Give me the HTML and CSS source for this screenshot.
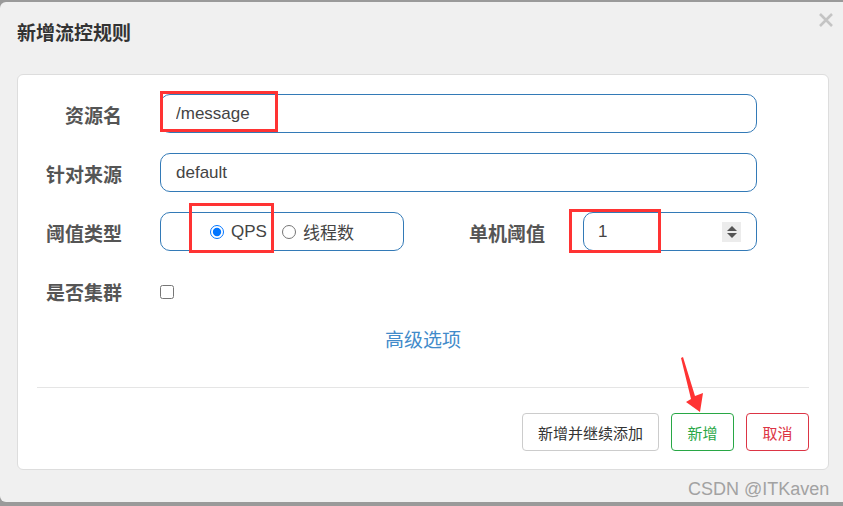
FILE: index.html
```html
<!DOCTYPE html>
<html lang="zh-CN">
<head>
    <meta charset="UTF-8">
    <meta name="viewport" content="width=device-width, initial-scale=1.0">
    <title>新增流控规则</title>
    <link rel="stylesheet" href="styles.css">
</head>
<body>
    <div class="modal">
        <div class="modal-header">
            <h4 class="modal-title">新增流控规则</h4>
            <button class="modal-close" type="button">
                <svg width="14" height="14" viewBox="0 0 14 14" fill="none" stroke="currentColor" stroke-width="2.6">
                    <path d="M1 1L13 13M13 1L1 13"></path>
                </svg>
            </button>
        </div>
        <div class="modal-body">
            <form class="rule-form">
                <div class="form-row">
                    <label class="form-label">资源名</label>
                    <input class="form-input wide" type="text" value="/message">
                </div>
                <div class="form-row">
                    <label class="form-label">针对来源</label>
                    <input class="form-input wide" type="text" value="default">
                </div>
                <div class="form-row">
                    <label class="form-label">阈值类型</label>
                    <div class="radio-group">
                        <label class="radio"><input type="radio" name="grade" checked>QPS</label>
                        <label class="radio"><input type="radio" name="grade">线程数</label>
                    </div>
                    <label class="form-label">单机阈值</label>
                    <div class="num-field">
                        <input type="text" value="1">
                        <span class="spinner"><i class="up"></i><i class="down"></i></span>
                    </div>
                </div>
                <div class="form-row">
                    <label class="form-label">是否集群</label>
                    <div class="check-cell"><input type="checkbox"></div>
                </div>
            </form>
            <div class="advanced"><a href="#">高级选项</a></div>
            <hr class="divider">
            <div class="modal-footer">
                <button class="btn btn-default" type="button">新增并继续添加</button>
                <button class="btn btn-success" type="button">新增</button>
                <button class="btn btn-danger" type="button">取消</button>
            </div>
        </div>
        <div class="watermark">CSDN @ITKaven</div>
    </div>

    <!-- annotations drawn over the screenshot -->
    <svg class="marks" width="843" height="506" viewBox="0 0 843 506">
        <g fill="none" stroke="#f33" stroke-width="3">
            <rect x="161.5" y="92.5" width="115" height="38"></rect>
            <rect x="190.5" y="204.5" width="82" height="47"></rect>
            <rect x="570.5" y="210.5" width="89" height="41"></rect>
        </g>
        <polygon fill="#f33" points="681,358 683,357 695,396 703,393 700,412 686,402 691,399"></polygon>
    </svg>
</body>
</html>
```

FILE: styles.css
```css
:root {
    --border-blue: #337ab7;
    --label-color: #555555;
    --link-color: #428bca;
    --green: #28a745;
    --red: #dc3545;
}

* {
    box-sizing: border-box;
}

body {
    margin: 0;
    height: 506px;
    overflow: hidden;
    position: relative;
    background: #9a9a9a;
    font-family: "Liberation Sans", "Noto Sans CJK SC", sans-serif;
    color: #333;
}

.modal {
    position: relative;
    margin-top: 2px;
    height: 500px;
    background: #f0f0f0;
    border-radius: 6px 0 0 6px;
}

.modal-header {
    height: 72px;
    display: flex;
    justify-content: space-between;
    align-items: flex-start;
    padding: 11px 10px 0 17px;
}

.modal-title {
    margin: 8px 0 0;
    font-size: 19px;
    line-height: 26px;
    font-weight: bold;
    color: #333;
}

.modal-close {
    background: none;
    border: none;
    padding: 0;
    color: #c4c4c4;
    cursor: pointer;
    line-height: 0;
}

.modal-body {
    margin-left: 17px;
    width: 812px;
    height: 396px;
    background: #fff;
    border: 1px solid #dddddd;
    border-radius: 6px;
    padding-top: 19px;
}

.rule-form {
    display: grid;
    row-gap: 20px;
    padding-right: 71px;
}

.form-row {
    display: grid;
    grid-template-columns: 104px 244px 1fr 174px;
    column-gap: 38px;
    align-items: center;
    height: 39px;
}

.form-label {
    text-align: right;
    font-size: 19px;
    line-height: 22px;
    font-weight: bold;
    color: var(--label-color);
    padding-top: 6px;
}

.form-input {
    height: 39px;
    border: 1px solid var(--border-blue);
    border-radius: 10px;
    padding: 0 15px;
    font-family: inherit;
    font-size: 17px;
    color: #444;
    outline: none;
    background: #fff;
}

.form-input.wide {
    grid-column: 2 / 5;
}

.radio-group {
    height: 39px;
    display: flex;
    align-items: center;
    justify-content: center;
    border: 1px solid var(--border-blue);
    border-radius: 10px;
}

.radio {
    display: flex;
    align-items: center;
    gap: 7px;
    font-size: 17px;
    color: #444;
}

.radio + .radio {
    margin-left: 15px;
}

.radio input {
    margin: 0;
    width: 14px;
    height: 14px;
}

.num-field {
    height: 39px;
    display: flex;
    align-items: center;
    border: 1px solid var(--border-blue);
    border-radius: 10px;
    padding: 0 15px 0 14px;
}

.num-field input {
    flex: 1;
    min-width: 0;
    border: none;
    outline: none;
    padding: 0;
    font-family: inherit;
    font-size: 17px;
    color: #444;
}

.spinner {
    width: 19px;
    height: 20px;
    background: #ececec;
    display: flex;
    flex-direction: column;
    align-items: center;
    justify-content: center;
    gap: 2px;
}

.spinner i {
    width: 0;
    height: 0;
    border-left: 5px solid transparent;
    border-right: 5px solid transparent;
}

.spinner .up {
    border-bottom: 5px solid #555;
}

.spinner .down {
    border-top: 5px solid #555;
}

.check-cell {
    display: flex;
    align-items: center;
    padding-top: 3px;
}

.check-cell input {
    margin: 0;
    width: 14px;
    height: 14px;
}

.advanced {
    margin-top: 20px;
    text-align: center;
    font-size: 19px;
    line-height: 22px;
}

.advanced a {
    color: var(--link-color);
    text-decoration: none;
}

.divider {
    margin: 35px 19px 0;
    border: 0;
    border-top: 1px solid #e5e5e5;
}

.modal-footer {
    margin-top: 25px;
    padding-right: 19px;
    display: flex;
    justify-content: flex-end;
    gap: 12px;
}

.btn {
    height: 38px;
    padding: 0 15px;
    min-width: 63px;
    background: #fff;
    border: 1px solid #cccccc;
    border-radius: 4px;
    font-family: inherit;
    font-size: 15px;
    color: #333;
    cursor: pointer;
}

.btn-success {
    border-color: var(--green);
    color: var(--green);
}

.btn-danger {
    border-color: var(--red);
    color: var(--red);
}

.watermark {
    position: absolute;
    left: 688px;
    top: 476px;
    font-size: 18px;
    line-height: 22px;
    color: #a2a2a2;
    white-space: nowrap;
}

.marks {
    position: absolute;
    left: 0;
    top: 0;
    pointer-events: none;
}
```
